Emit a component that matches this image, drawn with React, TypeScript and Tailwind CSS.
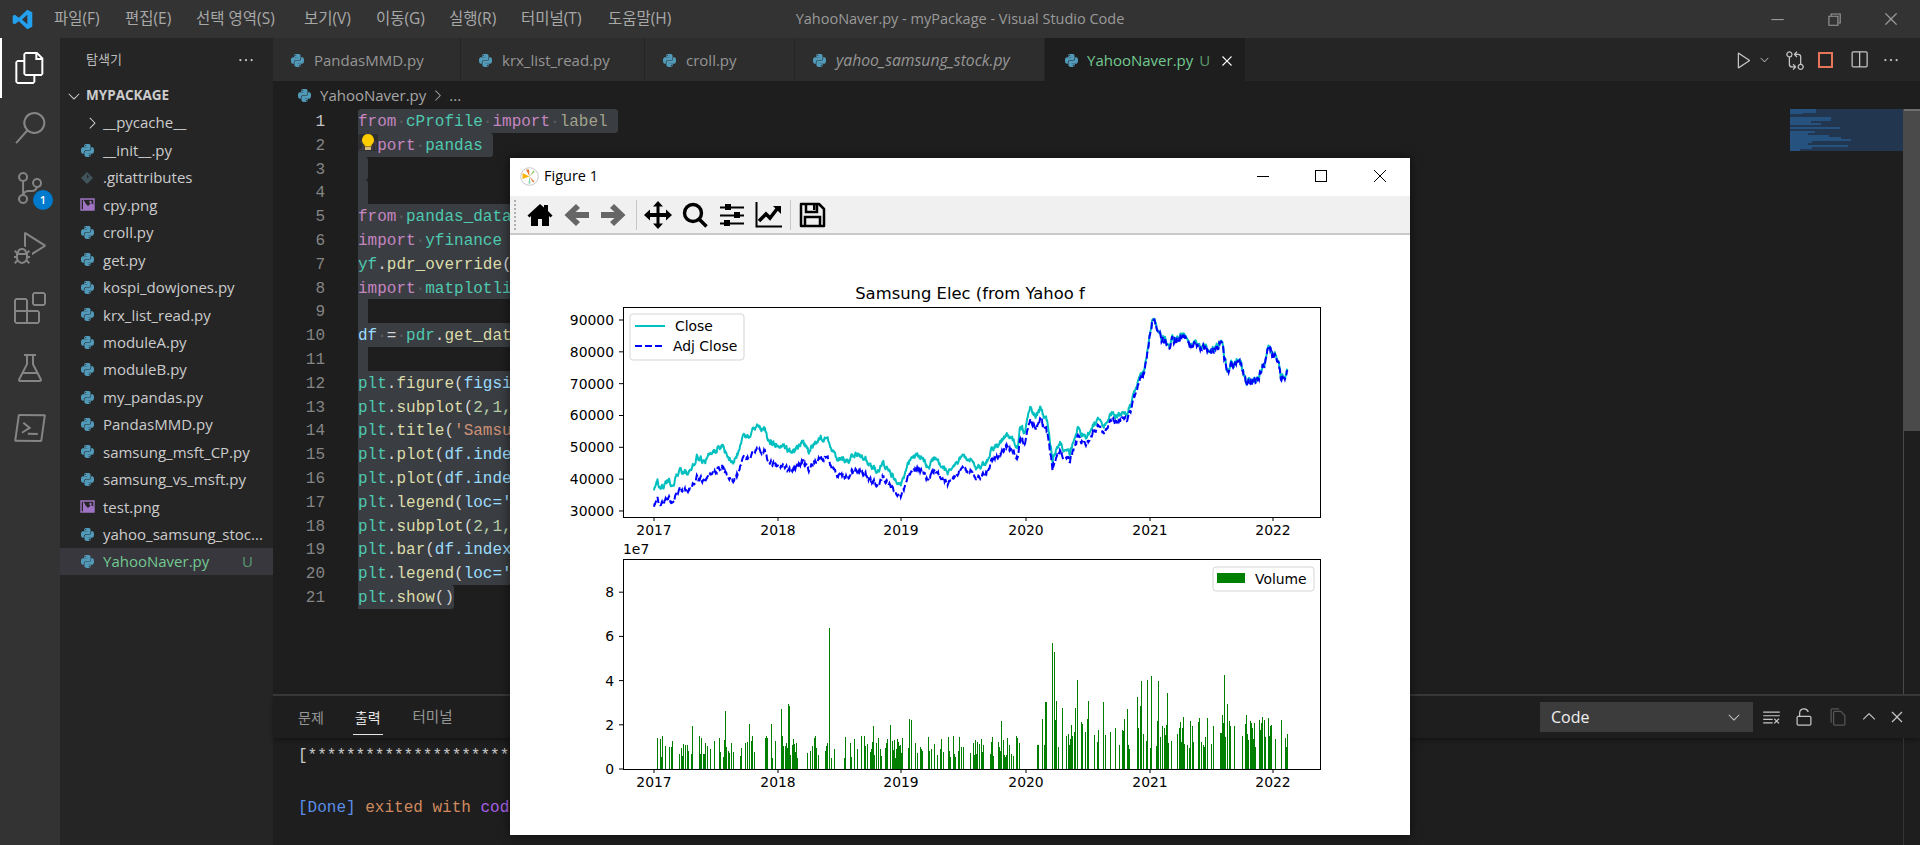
import React from "react";
import { FaPython } from "react-icons/fa";
import {
  VscFiles, VscSearch, VscSourceControl, VscDebugAlt, VscExtensions, VscBeaker, VscTerminalPowershell,
  VscChevronRight, VscChevronDown, VscEllipsis, VscChromeMinimize, VscChromeRestore, VscChromeClose,
  VscPlay, VscGitCompare, VscSplitHorizontal, VscClose, VscClearAll, VscUnlock, VscCopy, VscChevronUp,
} from "react-icons/vsc";

const UI = "font-['Open_Sans','Noto_Sans_CJK_KR',sans-serif]";
const MONO = "font-['Liberation_Mono','Noto_Sans_CJK_KR',monospace]";

const menus = [
  ["파일(F)", "w-[71px]"], ["편집(E)", "w-[71px]"], ["선택 영역(S)", "w-[108px]"], ["보기(V)", "w-[72px]"],
  ["이동(G)", "w-[73px]"], ["실행(R)", "w-[72px]"], ["터미널(T)", "w-[87px]"], ["도움말(H)", "w-[80px]"],
] as const;

function PyIcon({ className = "" }: { className?: string }) {
  return <FaPython className={`text-[#519aba] shrink-0 ${className}`} size={15} />;
}
function ImgIcon() {
  return (
    <svg width="15" height="14" viewBox="0 0 15 14" className="shrink-0">
      <path d="M1 1h13v11H1z" fill="none" stroke="#a074c4" strokeWidth="1.4" />
      <path d="M3 1v11h11V7l-3-2-3 3-2-2z" fill="#a074c4" />
      <circle cx="10.5" cy="4" r="1.2" fill="#a074c4" />
    </svg>
  );
}
function GitIcon() {
  return (
    <svg width="14" height="14" viewBox="0 0 14 14" className="shrink-0">
      <path d="M7 1l6 6-6 6-6-6z" fill="#41535b" />
      <path d="M7 3.5l2 2-2 2z" fill="#252526" />
    </svg>
  );
}

const files: [string, "py" | "git" | "img"][] = [
  ["__init__.py", "py"], [".gitattributes", "git"], ["cpy.png", "img"], ["croll.py", "py"], ["get.py", "py"],
  ["kospi_dowjones.py", "py"], ["krx_list_read.py", "py"], ["moduleA.py", "py"], ["moduleB.py", "py"],
  ["my_pandas.py", "py"], ["PandasMMD.py", "py"], ["samsung_msft_CP.py", "py"], ["samsung_vs_msft.py", "py"],
  ["test.png", "img"], ["yahoo_samsung_stoc...", "py"],
];

function Sidebar() {
  return (
    <aside className={`w-[213px] shrink-0 bg-[#252526] flex flex-col text-[15px] text-[#cccccc] ${UI}`}>
      <div className="h-[44px] flex items-center justify-between pl-[26px] pr-[18px] shrink-0">
        <span className="text-[13px] text-[#bbbbbb]">탐색기</span>
        <VscEllipsis size={18} className="text-[#cccccc]" />
      </div>
      <div className="h-[27px] flex items-center pl-[5px] shrink-0 font-bold text-[13.5px] text-[#cccccc]">
        <VscChevronDown size={18} className="mr-[3px]" />MYPACKAGE
      </div>
      <div className="h-[27.45px] flex items-center pl-[23px] shrink-0">
        <VscChevronRight size={18} className="mr-[2px]" />__pycache__
      </div>
      {files.map(([n, t]) => (
        <div key={n} className="h-[27.45px] flex items-center pl-[20px] pr-[6px] shrink-0">
          <span className="w-[23px] shrink-0">{t === "py" ? <PyIcon /> : t === "git" ? <GitIcon /> : <ImgIcon />}</span>
          <span className="whitespace-nowrap">{n}</span>
        </div>
      ))}
      <div className="h-[27.45px] flex items-center pl-[20px] pr-[20px] shrink-0 bg-[#37373d] text-[#73c991]">
        <span className="w-[23px] shrink-0"><PyIcon /></span>
        <span className="flex-1">YahooNaver.py</span>
        <span className="text-[#5a9a6f]">U</span>
      </div>
    </aside>
  );
}

const tabs: [string, string, boolean][] = [
  ["PandasMMD.py", "w-[188px]", false], ["krx_list_read.py", "w-[184px]", false],
  ["croll.py", "w-[150px]", false], ["yahoo_samsung_stock.py", "w-[250px]", true],
];

function TabBar() {
  return (
    <div className={`h-[43px] bg-[#252526] flex shrink-0 text-[15px] ${UI}`}>
      {tabs.map(([n, w, it]) => (
        <div key={n} className={`${w} bg-[#2d2d2d] border-r border-[#252526] flex items-center pl-[17px] gap-[9px] pt-[2px] text-[#969696] ${it ? "italic text-[15.75px]" : ""}`}>
          <PyIcon />{n}
        </div>
      ))}
      <div className="w-[200px] bg-[#1e1e1e] flex items-center pl-[19px] gap-[8px] pt-[2px] text-[#73c991]">
        <PyIcon />
        <span>YahooNaver.py</span>
        <span className="text-[#5a9a6f] -ml-[2px]">U</span>
        <VscClose size={18} className="text-white" />
      </div>
      <div className="flex-1 flex items-center justify-end pr-[20px] text-[#c5c5c5]">
        <VscPlay size={20} />
        <VscChevronDown size={13} className="ml-[4px] mr-[14px]" />
        <VscGitCompare size={20} className="mr-[13px]" />
        <span className="w-[15px] h-[16px] border-2 border-[#e8745a] mr-[16px]" />
        <VscSplitHorizontal size={20} className="mr-[13px]" />
        <VscEllipsis size={18} />
      </div>
    </div>
  );
}

const D = ({ c = "text-[#5a5d5e]" }: { c?: string }) => <span className={c}>·</span>;
const K = ({ children }: { children: React.ReactNode }) => <span className="text-[#c586c0]">{children}</span>;
const M = ({ children }: { children: React.ReactNode }) => <span className="text-[#4ec9b0]">{children}</span>;
const F = ({ children }: { children: React.ReactNode }) => <span className="text-[#dcdcaa]">{children}</span>;
const V = ({ children }: { children: React.ReactNode }) => <span className="text-[#9cdcfe]">{children}</span>;
const S = ({ children }: { children: React.ReactNode }) => <span className="text-[#ce9178]">{children}</span>;
const N = ({ children }: { children: React.ReactNode }) => <span className="text-[#b5cea8]">{children}</span>;
const P = ({ children }: { children: React.ReactNode }) => <span className="text-[#d4d4d4]">{children}</span>;

// The figure window covers these lines from x=510, so only the part to its left is written out.
const codeLines: { w: string; c: React.ReactNode }[] = [
  { w: "w-[260px]", c: <><K>from</K><D /><M>cProfile</M><D /><K>import</K><D /><span className="text-[#a2a28c]">label</span></> },
  { w: "w-[135px]", c: <><K>import</K><D /><M>pandas</M></> },
  { w: "w-[10px]", c: null },
  { w: "w-[10px]", c: null },
  { w: "w-[400px]", c: <><K>from</K><D /><M>pandas_data</M></> },
  { w: "w-[400px]", c: <><K>import</K><D /><M>yfinance</M></> },
  { w: "w-[400px]", c: <><M>yf</M><P>.</P><F>pdr_override</F><P>(</P></> },
  { w: "w-[400px]", c: <><K>import</K><D /><M>matplotli</M></> },
  { w: "w-[10px]", c: null },
  { w: "w-[400px]", c: <><V>df</V><D /><P>=</P><D /><M>pdr</M><P>.</P><F>get_dat</F></> },
  { w: "w-[10px]", c: null },
  ...([
    ["figure", "figsi"], ["subplot", "2,1,"], ["title", "'Samsu"], ["plot", "df.inde"], ["plot", "df.inde"],
    ["legend", "loc='"], ["subplot", "2,1,"], ["bar", "df.index"], ["legend", "loc='"],
  ] as const).map(([f, a]) => ({
    w: "w-[400px]",
    c: (
      <>
        <M>plt</M><P>.</P><F>{f}</F><P>(</P>
        {a.startsWith("2") ? <N>{a}</N> : a.startsWith("'") ? <S>{a}</S> : <V>{a}</V>}
      </>
    ),
  })),
  { w: "w-[96px]", c: <><M>plt</M><P>.</P><F>show</F><P>()</P></> },
];

const miniRows: [number, number][] = [[26,4],[13,1],[0,3],[41,4],[21,2],[31,2],[0,2],[50,2],[0,2],[25,2],[18,2],[39,2],[51,2],[61,2],[22,2],[18,2],[58,2],[22,2],[10,2]];

function Editor() {
  return (
    <div className={`flex-1 min-h-0 flex flex-col relative ${MONO} text-[16px]`}>
      <div className={`h-[27px] flex items-center pl-[24px] pt-[2px] shrink-0 text-[15px] text-[#a6a6a6] ${UI}`}>
        <PyIcon className="mr-[8px]" />YahooNaver.py<VscChevronRight size={17} className="mx-[3px]" /><span>...</span>
      </div>
      <div className="flex-1 min-h-0 flex overflow-hidden pt-[1px]">
        <div className="w-[85px] shrink-0 text-right pr-[33px]">
          {codeLines.map((_, i) => (
            <div key={i} className={`h-[23.8px] leading-[26px] ${i === 0 ? "text-[#c6c6c6]" : "text-[#858585]"}`}>{i + 1}</div>
          ))}
        </div>
        <div className="flex-1 min-w-0 whitespace-pre relative">
          {codeLines.map((l, i) => {
            const next = codeLines[i + 1];
            const prev = codeLines[i - 1];
            return (
              <div key={i} className="h-[23.8px] leading-[26px] relative">
                <div className={`${l.w} h-full bg-[#3a3d41] ${i === 0 ? "rounded-t-[3px]" : ""} ${prev && prev.c === null ? "rounded-tr-[3px]" : ""} ${i === 0 || !next || next.c === null ? "rounded-r-[3px]" : ""}`}>
                  {l.c}
                </div>
              </div>
            );
          })}
          <div className="absolute left-0 top-[25px] w-[20px] h-[17px] bg-[#2b2b2b]/80 flex items-start justify-center">
            <svg width="12" height="16" viewBox="0 0 12 16">
              <path d="M6 0a6 6 0 0 1 3.400 10.900V12.500H2.600V10.900A6 6 0 0 1 6 0z" fill="#ffcc00" />
              <rect x="3" y="13" width="6" height="3" fill="#d7ba7d" />
            </svg>
          </div>
        </div>
      </div>
      <div className="absolute left-[1517px] top-[28px] w-[113px] h-[42px] bg-[#22374f] overflow-hidden">
        {miniRows.map(([w, h], i) => (
          <div key={i} className="bg-[#265280]" style={{ width: w, height: h }} />
        ))}
      </div>
      <div className="absolute left-[1630px] top-[28px] bottom-0 w-[1px] bg-[#4a4a4a]" />
      <div className="absolute right-0 top-[28px] w-[16px] h-[322px] bg-[#4a4a4a] border-t-2 border-[#6e6e6e]" />
    </div>
  );
}

function Panel() {
  return (
    <div className={`h-[151px] shrink-0 border-t-2 border-[#3a3a3a] flex flex-col ${UI}`}>
      <div className="h-[42px] shrink-0 flex items-center pl-[25px] pr-[13px] text-[14px] text-[#969696] shadow-[0_2px_4px_rgba(0,0,0,0.35)]">
        <span className="mr-[29px]">문제</span>
        <span className="mr-[30px] text-[#e7e7e7] border-b border-[#e7e7e7] h-[30px] leading-[26px] mt-[6px] px-[2px]">출력</span>
        <span className="text-[14.5px]">터미널</span>
        <div className="ml-auto w-[213px] h-[30px] bg-[#3c3c3c] flex items-center pl-[11px] pr-[10px] text-[16px] text-[#f0f0f0]">
          <span className="flex-1">Code</span><VscChevronDown size={18} className="text-[#c5c5c5]" />
        </div>
        <div className="flex items-center text-[#c5c5c5]">
          <VscClearAll size={19} className="ml-[8.5px]" />
          <VscUnlock size={20} className="ml-[13.5px]" />
          <VscCopy size={20} className="ml-[14px] text-[#555555]" />
          <VscChevronUp size={20} className="ml-[11px]" />
          <VscClose size={20} className="ml-[8px]" />
        </div>
      </div>
      <div className={`flex-1 min-h-0 pl-[25px] pt-[5px] overflow-hidden whitespace-pre text-[16px] leading-[26px] ${MONO} border-r border-[#333333] mr-[16px]`}>
        <div className="text-[#c8c8c8]">[**********************</div>
        <div className="h-[26px]" />
        <div><span className="text-[#5b8ee6]">[Done]</span> <span className="text-[#ce8a5e]">exited with</span> <span className="text-[#a860e8]">cod</span></div>
      </div>
    </div>
  );
}

/* --- matplotlib figure --- */
function rng(seed: number) {
  let s = seed;
  return () => {
    s = (s * 1664525 + 1013904223) % 4294967296;
    return s / 4294967296;
  };
}
const rawClose = [[189,665],[196,640],[205,650],[215,630],[225,645],[240,605],[262,608],[275,560],[290,575],[305,550],[325,520],[340,570],[355,560],[370,500],[385,490],[397,462],[410,475],[420,515],[440,520],[465,550],[488,515],[500,545],[518,503],[535,510],[555,560],[580,570],[600,550],[620,580],[640,610],[650,580],[685,645],[705,560],[720,555],[740,585],[755,560],[780,610],[800,570],[825,560],[835,595],[860,570],[870,535],[900,495],[920,530],[925,470],[935,480],[945,412],[955,440],[965,420],[980,460],[990,570],[1005,520],[1025,550],[1040,480],[1060,500],[1080,445],[1095,470],[1110,430],[1125,440],[1140,430],[1150,390],[1165,310],[1175,300],[1190,140],[1205,200],[1225,220],[1248,190],[1270,220],[1290,225],[1310,235],[1330,220],[1340,300],[1365,270],[1380,340],[1400,330],[1425,240],[1440,260],[1450,325],[1463,295]];
const X0 = 623, AT = 307, AW = 697, AH = 210;
const zx = (v: number) => 560 + v / 2.01 - X0;
const zy = (v: number) => 270 + v / 3 - AT;
const ratioStops = [[189,0.86],[438,0.875],[686,0.905],[936,0.935],[1150,0.975],[1185,0.996],[1500,0.996]];
function ratioAt(x: number) {
  for (let i = 0; i < ratioStops.length - 1; i++) {
    const [a, ra] = ratioStops[i], [b, rb] = ratioStops[i + 1];
    if (x <= b) return ra + ((rb - ra) * (x - a)) / (b - a);
  }
  return 0.996;
}

function buildSeries() {
  const r = rng(42);
  const close: [number, number][] = [];
  const adj: [number, number][] = [];
  let n = 0;
  for (let i = 0; i < rawClose.length - 1; i++) {
    const [a, b] = rawClose[i], [c, d] = rawClose[i + 1];
    const steps = Math.max(2, Math.round(c - a));
    for (let j = 0; j < steps; j++) {
      const t = j / steps;
      const xx = a + (c - a) * t;
      n = n * 0.7 + (r() - 0.5) * (xx > 1185 ? 7 : 5);
      const x = zx(xx);
      const y = zy(b + (d - b) * t) + n;
      close.push([x, y]);
      const price = 90000 - ((y - 13) / 31.83) * 10000;
      const g = (price * (1 - ratioAt(xx)) * 3.183) / 1000;
      adj.push([x, y + g]);
    }
  }
  const path = (p: [number, number][]) => "M" + p.map(([x, y]) => `${x.toFixed(1)} ${y.toFixed(1)}`).join("L");
  return { close: path(close), adj: path(adj) };
}
const series = buildSeries();

const clusters = [[195,225],[237,266],[278,310],[318,350],[362,390],[404,426],[432,433],[445,476],[486,518],[530,558],[571,605],[612,645],[654,688],[697,727],[739,770],[779,812],[820,852],[862,872],[880,925],[948,1010],[1018,1062],[1073,1105],[1115,1146],[1159,1187],[1197,1229],[1238,1272],[1282,1314],[1326,1355],[1368,1397],[1405,1438],[1448,1450],[1458,1463]];
const peaks: Record<number, number> = {540:6.37,988:5.7,992:5.3,1040:4.03,1168:3.98,1180:4.03,1187:4.2,1202:3.98,1335:4.25,1220:3.45,459:2.95,461:2.85,445:2.7,331:2.63,380:2.05,424:2.05,266:1.95,1062:3.07,1092:3.05,974:3.05,976:3.05,996:3.07,1009:2.77,1035:2.77,1140:2.72,1159:3.25,1165:2.85,1340:2.95,702:2.27,706:2.2,887:2.15,1284:2.3,1330:2.45,1378:2.45,1405:2.2,1412:2.35,1450:2.22,1430:2.0,630:1.95,664:2.0,1250:1.85,1270:1.95,1344:2.15,1388:2.1,1416:2.2};
function buildBars() {
  const r = rng(7);
  const out: [number, number][] = [];
  const pk: [number, number][] = Object.entries(peaks).map(([k, v]) => [Math.round(zx(Number(k))), v]);
  clusters.forEach(([a, b]) => {
    for (let x = Math.round(zx(a)); x <= Math.round(zx(b)); x++) {
      if (r() < 0.5) {
        const hi = a >= 948 ? 0.9 + r() * 1.5 : 0.5 + r() * 1.0;
        out.push([x, hi]);
      }
    }
  });
  pk.forEach((p) => out.push(p));
  return out;
}
const bars = buildBars();

const tickYears = [["2017", 31], ["2018", 155], ["2019", 278], ["2020", 403], ["2021", 527], ["2022", 650]] as const;

function XTicks() {
  return (
    <>
      {tickYears.map(([l, x]) => (
        <g key={l}>
          <line x1={x} x2={x} y1={AH} y2={AH + 4} stroke="#000" strokeWidth="1" />
          <text x={x} y={AH + 18} textAnchor="middle" fontSize="13.9" fill="#000">{l}</text>
        </g>
      ))}
    </>
  );
}

function Chart() {
  return (
    <svg width="900" height="600" viewBox="0 0 900 600" className="block font-['DejaVu_Sans',sans-serif]">
      <g transform="translate(113 72)">
        <text x={347} y={-8} textAnchor="middle" fontSize="16.4" fill="#000">Samsung Elec (from Yahoo f</text>
        <path d={series.close} fill="none" stroke="#00bfbf" strokeWidth="2" strokeLinejoin="round" />
        <path d={series.adj} fill="none" stroke="#0000ff" strokeWidth="2" strokeDasharray="7 3" />
        <rect x="0.5" y="0.5" width={AW} height={AH} fill="none" stroke="#000" strokeWidth="1" />
        {[90000, 80000, 70000, 60000, 50000, 40000, 30000].map((v, i) => {
          const y = 13 + i * 31.83;
          return (
            <g key={v}>
              <line x1={-4} x2={0} y1={y} y2={y} stroke="#000" />
              <text x={-9} y={y + 5} textAnchor="end" fontSize="13.9" fill="#000">{v}</text>
            </g>
          );
        })}
        <XTicks />
        <g>
          <rect x="7" y="7" width="114" height="46" rx="3" fill="#fff" stroke="#d5d5d5" />
          <line x1="12" x2="42" y1="19" y2="19" stroke="#00bfbf" strokeWidth="2" />
          <text x="52" y="24" fontSize="13.9" fill="#000">Close</text>
          <line x1="12" x2="42" y1="39" y2="39" stroke="#0000ff" strokeWidth="2" strokeDasharray="7 3" />
          <text x="50" y="44" fontSize="13.9" fill="#000">Adj Close</text>
        </g>
      </g>
      <g transform="translate(113 324)">
        <text x={0} y={-5} fontSize="13.9" fill="#000">1e7</text>
        <g shapeRendering="crispEdges">
          {bars.map(([x, h], i) => (
            <rect key={i} x={x} y={AH - h * 22.1} width="1" height={h * 22.1} fill="#008000" />
          ))}
        </g>
        <rect x="0.5" y="0.5" width={AW} height={AH} fill="none" stroke="#000" strokeWidth="1" />
        {[0, 2, 4, 6, 8].map((v, i) => {
          const y = AH - i * 44.2;
          return (
            <g key={v}>
              <line x1={-4} x2={0} y1={y} y2={y} stroke="#000" />
              <text x={-9} y={y + 5} textAnchor="end" fontSize="13.9" fill="#000">{v}</text>
            </g>
          );
        })}
        <XTicks />
        <g>
          <rect x="590" y="8" width="101" height="24" rx="3" fill="#fff" stroke="#d5d5d5" />
          <rect x="594" y="14" width="28" height="10" fill="#008000" />
          <text x="632" y="25" fontSize="13.9" fill="#000">Volume</text>
        </g>
      </g>
    </svg>
  );
}

function ToolIcon({ children }: { children: React.ReactNode }) {
  return <svg width="28" height="28" viewBox="0 0 28 28" className="block shrink-0">{children}</svg>;
}

function FigureWindow() {
  return (
    <div className="absolute left-[510px] top-[158px] w-[900px] h-[677px] bg-white shadow-[0_0_10px_rgba(0,0,0,0.55)] flex flex-col font-['Open_Sans',sans-serif]">
      <div className="h-[36px] shrink-0 flex items-center pl-[10px] text-[14.5px] text-black">
        <svg width="19" height="19" viewBox="0 0 19 19" className="mr-[5px]">
          <circle cx="9.5" cy="9.5" r="8.8" fill="#fff" stroke="#c8c8c8" />
          <path d="M9.500 9.500L2.500 6v6z" fill="#f5b50a" />
          <path d="M9.500 9.500L6 2.500h3z" fill="#e8762a" />
          <path d="M9.500 9.500l4-6 1.200 1z" fill="#8ac24a" />
          <path d="M9.500 9.500l5 5-1.500 1z" fill="#e8762a" />
          <path d="M9.500 9.500l-1 7h2z" fill="#7fd0a0" />
        </svg>
        <span className="flex-1">Figure 1</span>
        <svg width="140" height="14" viewBox="0 0 140 14" className="mr-[13px]">
          <path d="M0 7.500h12" stroke="#000" />
          <rect x="58.500" y="1.500" width="11" height="11" fill="none" stroke="#000" />
          <path d="M117 1l12 12M129 1l-12 12" stroke="#000" fill="none" />
        </svg>
      </div>
      <div className="h-[2px] shrink-0" />
      <div className="h-[39px] shrink-0 bg-[#f0f0f0] border-b-2 border-[#c9c9c9] flex items-center pl-[4px]">
        <div className="w-[2px] h-[30px] border-l-2 border-dotted border-[#b0b0b0] mr-[10px]" />
        <ToolIcon>
          <path d="M14 3L1.500 14.500l2 2L5 15v10h7v-7h4v7h7V15l1.500 1.500 2-2L22 10V4h-4v2.500z" />
        </ToolIcon>
        <div className="w-[9px]" />
        <ToolIcon><path d="M1.500 14L13 3l4 4-4.500 4H26v6H12.500l4.500 4-4 4z" fill="#666666" /></ToolIcon>
        <div className="w-[8px]" />
        <ToolIcon><path d="M26.500 14L15 3l-4 4 4.500 4H2v6h13.500L11 21l4 4z" fill="#666666" /></ToolIcon>
        <div className="w-[10px] h-[30px] border-r border-[#c8c8c8] mr-[7px]" />
        <ToolIcon>
          <path d="M14 0l5 5.500h-3.500V12H22V8.500L28 14l-6 5.500V16h-6.500v6.500H19L14 28l-5-5.500h3.500V16H6v3.500L0 14l6-5.500V12h6.500V5.500H9z" />
        </ToolIcon>
        <div className="w-[9px]" />
        <ToolIcon><circle cx="12" cy="12" r="8.500" fill="none" stroke="#000" strokeWidth="3.400" /><path d="M18 18l7.500 7.500" stroke="#000" strokeWidth="3.600" /></ToolIcon>
        <div className="w-[9px]" />
        <ToolIcon>
          <path d="M2 6.500h24M2 14.500h24M2 22.500h24" stroke="#000" strokeWidth="2" />
          <rect x="7" y="3" width="6" height="6" /><rect x="16" y="11" width="6" height="6" /><rect x="6" y="19" width="6" height="6" />
        </ToolIcon>
        <div className="w-[9px]" />
        <ToolIcon>
          <path d="M1.500 1v24.500H27" fill="none" stroke="#000" strokeWidth="2" />
          <path d="M4 20l7-7 4 4 7-9" fill="none" stroke="#000" strokeWidth="3.500" />
          <path d="M18 5h8v8z" />
        </ToolIcon>
        <div className="w-[8px] h-[30px] border-r border-[#c8c8c8] mr-[7px]" />
        <ToolIcon>
          <path d="M3 3h18l5 5v17H3z" fill="none" stroke="#000" strokeWidth="2.500" strokeLinejoin="round" />
          <path d="M8 3v8h11V3" fill="none" stroke="#000" strokeWidth="2.500" />
          <rect x="15" y="4" width="2.500" height="5" />
          <path d="M7 25v-9h15v9" fill="none" stroke="#000" strokeWidth="2.500" />
        </ToolIcon>
      </div>
      <div className="flex-1 min-h-0 overflow-hidden"><Chart /></div>
    </div>
  );
}

export default function App() {
  return (
    <div className={`relative w-[1920px] h-[845px] overflow-hidden bg-[#1e1e1e] flex flex-col ${UI}`}>
      <header className="h-[38px] shrink-0 bg-[#333333] flex items-center relative">
        <div className="w-[54px] shrink-0 pl-[12px]">
          <svg width="21" height="21" viewBox="0 0 24 24" className="block">
            <path d="M17.500 0.800L23.200 3.600V20.400L17.500 23.200L7.800 14L3.300 17.500L0.800 16.200V7.800L3.300 6.500L7.800 10zM17.500 6.500L11.500 12L17.500 17.500z" fill="#23a0ee" />
          </svg>
        </div>
        {menus.map(([m, w]) => (
          <span key={m} className={`${w} shrink-0 text-[15.5px] text-[#a8a8a8] whitespace-nowrap`}>{m}</span>
        ))}
        <div className="absolute left-0 right-0 top-0 h-full flex items-center justify-center text-[14.5px] text-[#9a9a9a] pointer-events-none">
          YahooNaver.py - myPackage - Visual Studio Code
        </div>
        <div className="ml-auto flex items-center text-[#9a9a9a]">
          <VscChromeMinimize size={18} className="mr-[39px]" />
          <VscChromeRestore size={18} className="mr-[39px]" />
          <VscChromeClose size={18} className="mr-[20px]" />
        </div>
      </header>
      <div className="flex-1 min-h-0 flex">
        <nav className="w-[60px] shrink-0 bg-[#333333] flex flex-col items-center text-[#858585] relative">
          <div className="absolute left-0 top-0 w-[2px] h-[60px] bg-white" />
          <div className="h-[60px] flex items-center"><VscFiles size={32} className="text-white" /></div>
          <div className="h-[60px] flex items-center"><VscSearch size={32} /></div>
          <div className="h-[60px] flex items-center relative">
            <VscSourceControl size={32} />
            <span className="absolute left-[19px] top-[32px] w-[20px] h-[20px] rounded-full bg-[#007acc] text-white text-[11px] font-semibold flex items-center justify-center">1</span>
          </div>
          <div className="h-[60px] flex items-center"><VscDebugAlt size={32} /></div>
          <div className="h-[60px] flex items-center"><VscExtensions size={32} /></div>
          <div className="h-[60px] flex items-center"><VscBeaker size={32} /></div>
          <div className="h-[60px] flex items-center"><VscTerminalPowershell size={32} /></div>
        </nav>
        <Sidebar />
        <main className="flex-1 min-w-0 flex flex-col">
          <TabBar />
          <Editor />
          <Panel />
        </main>
      </div>
      <FigureWindow />
    </div>
  );
}
